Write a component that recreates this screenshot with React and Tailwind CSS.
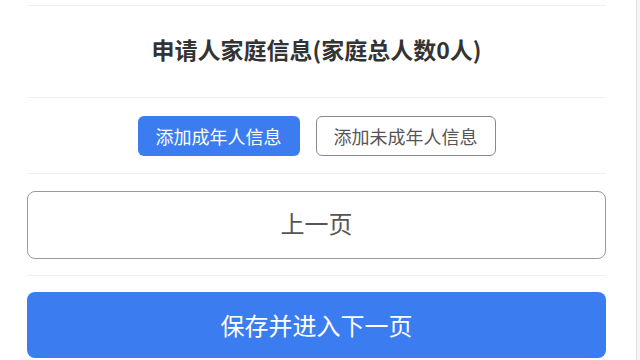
export default function App() {
  const font = { fontFamily: '"Noto Sans CJK SC", "Noto Sans", sans-serif' };
  return (
    <div className="w-[640px] h-[360px] overflow-hidden bg-white flex" style={font}>
      <div className="flex-1 pl-[27px] pr-[30px] flex flex-col">
        <div className="h-[6px] border-b border-[#f0f0f0]" />
        <div className="h-[92px] pb-[4px] flex items-center justify-center border-b border-[#f0f0f0]">
          <span className="text-[23px] font-bold text-[#333] leading-none">申请人家庭信息(家庭总人数0人)</span>
        </div>
        <div className="h-[76px] flex items-center justify-center gap-4 border-b border-[#f0f0f0]">
          <button className="h-[40px] px-[18px] rounded-[6px] bg-[#3b7cf1] text-white text-[18px] leading-none">添加成年人信息</button>
          <button className="h-[40px] px-[17px] rounded-[6px] border border-[#8a8a8a] bg-white text-[#555] text-[18px] leading-none">添加未成年人信息</button>
        </div>
        <div className="h-[102px] flex items-center border-b border-[#f0f0f0]">
          <button className="w-full h-[68px] pb-[3px] rounded-[8px] border border-[#9a9a9a] bg-white text-[#555] text-[24px] leading-none">上一页</button>
        </div>
        <div className="pt-[16px]">
          <button className="w-full h-[66px] rounded-[8px] bg-[#3b7cf1] text-white text-[24px] leading-none">保存并进入下一页</button>
        </div>
      </div>
      <div className="w-[4px] shrink-0 border-l border-[#e0e0e0] bg-[#f6f6f6]" />
    </div>
  );
}
